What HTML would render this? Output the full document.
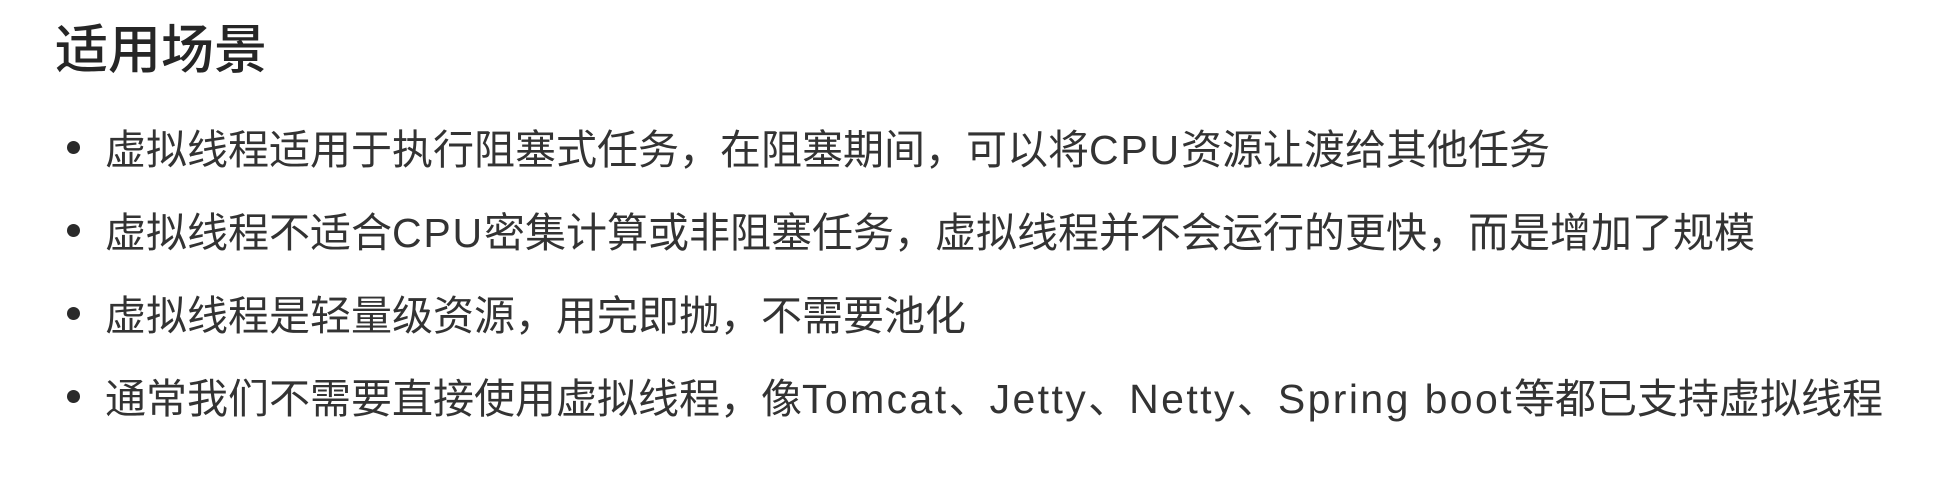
<!DOCTYPE html>
<html><head><meta charset="utf-8"><style>
html,body{margin:0;padding:0;background:#fff;width:1942px;height:490px;overflow:hidden}
body{font-family:"Liberation Sans","Noto Sans CJK SC",sans-serif;color:#333;position:relative}
.t{position:absolute;left:55px;top:21px;font-size:53px;line-height:60px;font-weight:500;color:#262626;white-space:nowrap}
.l{position:absolute;left:105px;font-size:41px;line-height:50px;white-space:nowrap}
.e{letter-spacing:1.8px}
.f{letter-spacing:2.4px}
.d{position:absolute;left:67px;width:13px;height:13px;border-radius:50%;background:#2a2a2a}
</style></head><body>
<div class="t">适用场景</div>
<div class="d" style="top:141px"></div>
<div class="l" style="top:125px">虚拟线程适用于执行阻塞式任务，在阻塞期间，可以将<span class="e">CPU</span>资源让渡给其他任务</div>
<div class="d" style="top:224px"></div>
<div class="l" style="top:208px">虚拟线程不适合<span class="e">CPU</span>密集计算或非阻塞任务，虚拟线程并不会运行的更快，而是增加了规模</div>
<div class="d" style="top:307px"></div>
<div class="l" style="top:291px">虚拟线程是轻量级资源，用完即抛，不需要池化</div>
<div class="d" style="top:390px"></div>
<div class="l" style="top:374px">通常我们不需要直接使用虚拟线程，像<span class="f">Tomcat</span>、<span class="f">Jetty</span>、<span class="f">Netty</span>、<span class="f">Spring boot</span>等都已支持虚拟线程</div>
</body></html>
